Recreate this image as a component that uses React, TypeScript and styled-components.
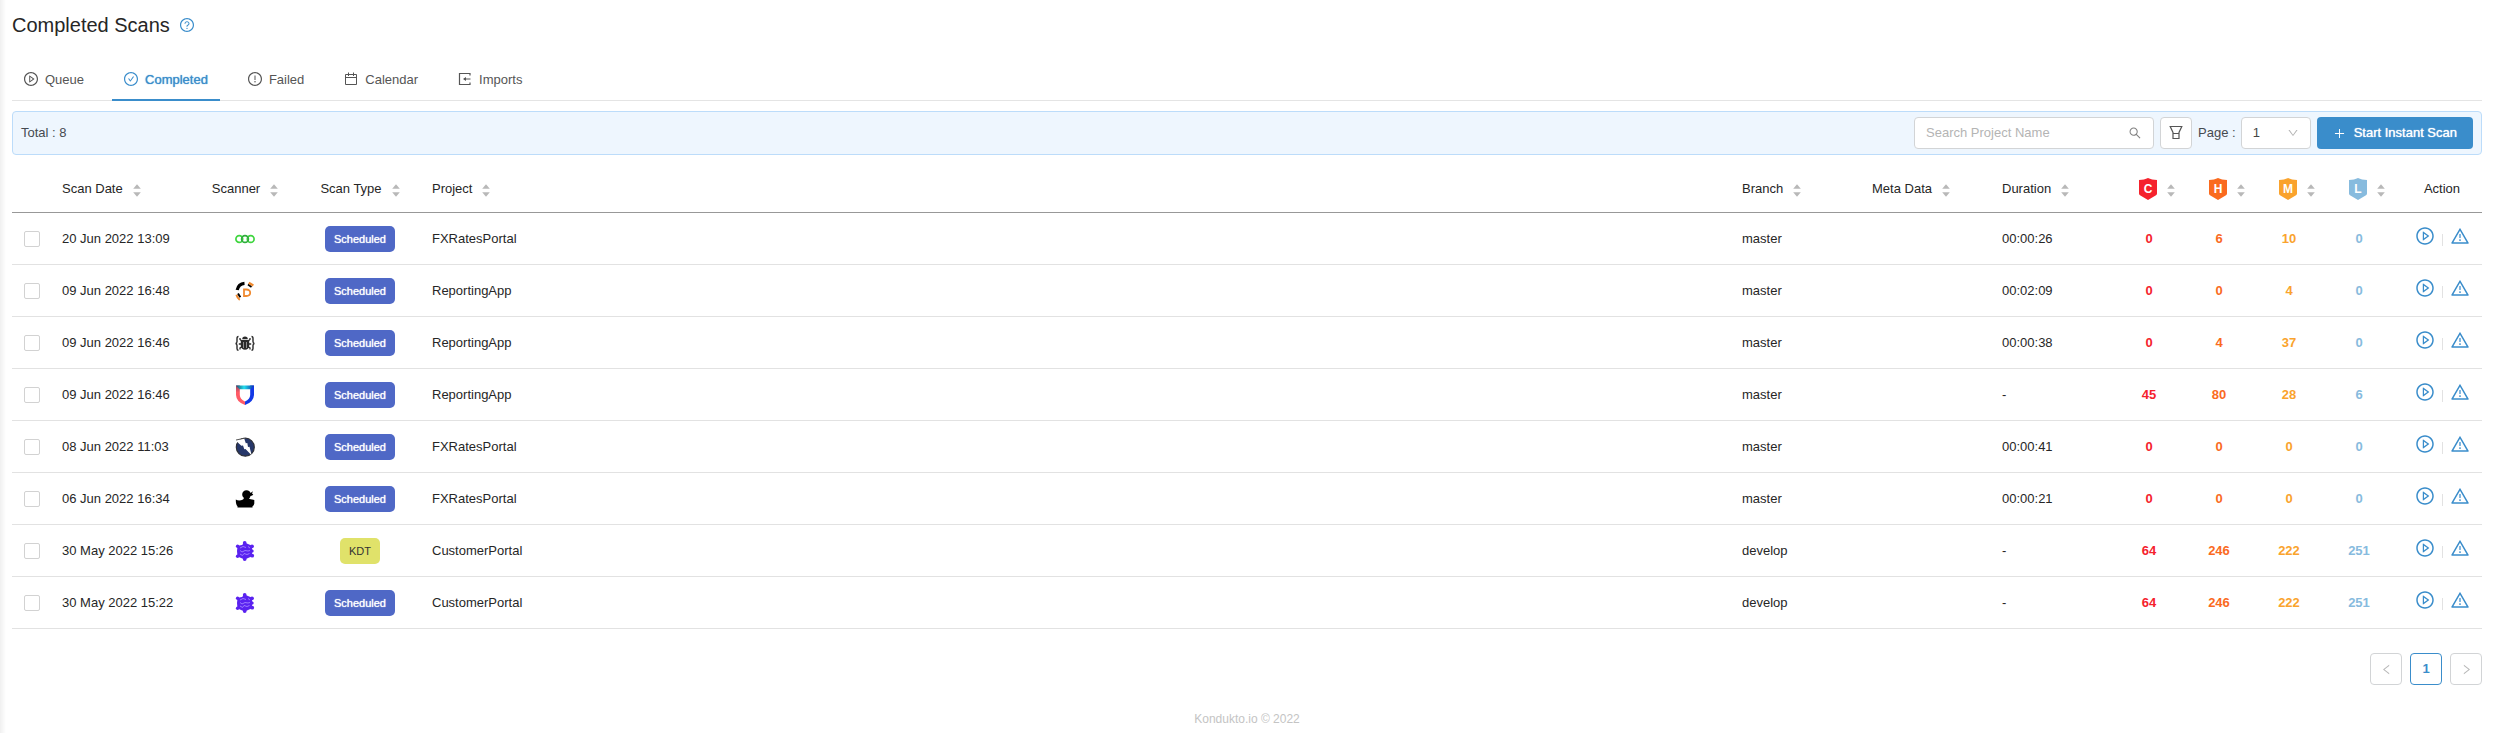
import React from "react";
import styled, { createGlobalStyle } from "styled-components";
import {
  AiOutlineCheckCircle,
  AiOutlineDown,
  AiOutlineExclamationCircle,
  AiOutlineLeft,
  AiOutlinePlayCircle,
  AiOutlinePlus,
  AiOutlineQuestionCircle,
  AiOutlineRight,
  AiOutlineSearch,
  AiOutlineWarning,
} from "react-icons/ai";

const GlobalStyle = createGlobalStyle`
  *, *::before, *::after { box-sizing: border-box; }
  body {
    margin: 0;
    background: #fff;
    color: #262626;
    font: 13px/20px "Liberation Sans", Arial, sans-serif;
  }
  button, input, select { font: inherit; color: inherit; }
  svg { display: block; flex: none; }
`;

const blue = "#3a8dcb";

const Page = styled.main`
  min-height: 100vh;
  padding: 10px 13px 4px 12px;
  background: linear-gradient(to right, #f0f0f0, #fff 6px);
`;

const TitleBar = styled.header`
  display: flex;
  align-items: center;
  gap: 9px;
  height: 30px;
  margin-bottom: 17px;
`;

const Title = styled.h1`
  margin: 0;
  font-size: 20px;
  line-height: 30px;
  font-weight: 400;
`;

const HelpButton = styled.button`
  padding: 0;
  border: 0;
  background: none;
  color: ${blue};
  font-size: 16px;
  cursor: pointer;
`;

const Tabs = styled.nav`
  display: flex;
  gap: 16px;
  height: 44px;
  box-shadow: inset 0 -1px #e4e4e4;
`;

const Tab = styled.a<{ $active?: boolean }>`
  display: flex;
  align-items: center;
  gap: 6px;
  padding: 3px 12px 0 11px;
  border-bottom: 2px solid ${(p) => (p.$active ? blue : "transparent")};
  color: ${(p) => (p.$active ? blue : "#555")};
  text-shadow: ${(p) => (p.$active ? "0 0 1px currentColor" : "none")};
  text-decoration: none;
  & > svg { width: 16px; height: 16px; margin-bottom: 2px; }
`;

const Toolbar = styled.div`
  display: flex;
  align-items: center;
  gap: 6px;
  height: 44px;
  margin: 10px 0;
  padding: 0 8px;
  border: 1px solid #bcdcfa;
  border-radius: 4px;
  background: #eef6fe;
  color: #454a50;
`;

const Total = styled.span`
  flex: 1;
`;

const SearchField = styled.label`
  display: flex;
  align-items: center;
  width: 240px;
  height: 32px;
  padding: 0 11px;
  border: 1px solid #d2d4d6;
  border-radius: 4px;
  background: #fff;
  color: #808080;
`;

const SearchInput = styled.input`
  flex: 1;
  min-width: 0;
  padding: 0;
  border: 0;
  outline: 0;
  background: none;
  &::placeholder { color: #b4b4b4; opacity: 1; }
`;

const SquareButton = styled.button<{ $active?: boolean }>`
  display: flex;
  align-items: center;
  justify-content: center;
  width: 32px;
  height: 32px;
  padding: 0;
  border: 1px solid ${(p) => (p.$active ? blue : "#d2d4d6")};
  border-radius: 4px;
  background: #fff;
  color: ${(p) => (p.$active ? blue : "#555")};
  font-weight: ${(p) => (p.$active ? 700 : 400)};
  &:disabled { color: #b8b8b8; }
`;

const PageLabel = styled.label`
  display: flex;
  align-items: center;
  gap: 5px;
`;

const SelectBox = styled.span`
  display: grid;
  align-items: center;
  width: 70px;
  height: 32px;
  color: #454545;
  & > * { grid-area: 1 / 1; }
  & > svg {
    justify-self: end;
    margin-right: 12px;
    color: #b4b4b4;
    font-size: 12px;
    pointer-events: none;
  }
`;

const Select = styled.select`
  width: 100%;
  height: 32px;
  padding: 0 11px;
  border: 1px solid #d2d4d6;
  border-radius: 4px;
  background: #fff;
  appearance: none;
`;

const PrimaryButton = styled.button`
  display: flex;
  align-items: center;
  gap: 8px;
  height: 32px;
  padding: 0 16px;
  border: 0;
  border-radius: 4px;
  background: ${blue};
  color: #fff;
  text-shadow: 0 0 1px currentColor;
`;

const ScanTable = styled.table`
  width: 100%;
  table-layout: fixed;
  border-collapse: separate;
  border-spacing: 0;
`;

const Col = styled.col<{ $w?: number }>`
  width: ${(p) => (p.$w ? `${p.$w}px` : "auto")};
`;

const HeadCell = styled.th<{ $center?: boolean }>`
  height: 48px;
  padding: 0 ${(p) => (p.$center ? 0 : 12)}px;
  border-bottom: 1px solid #989898;
  font-weight: 400;
  text-align: ${(p) => (p.$center ? "center" : "left")};
`;

const HeadLabel = styled.span`
  display: inline-flex;
  align-items: center;
  gap: 10px;
  vertical-align: middle;
`;

const SortButton = styled.button`
  padding: 4px 0 0;
  border: 0;
  background: none;
  color: #b8b8b8;
`;

const Cell = styled.td<{ $center?: boolean }>`
  height: 52px;
  padding: 0 ${(p) => (p.$center ? 0 : 12)}px;
  border-bottom: 1px solid #e2e2e2;
  text-align: ${(p) => (p.$center ? "center" : "left")};
`;

const CountCell = styled(Cell)<{ $color: string }>`
  padding-right: 16px;
  color: ${(p) => p.$color};
  font-weight: 700;
  text-align: center;
`;

const Checkbox = styled.input`
  display: block;
  width: 16px;
  height: 16px;
  margin: 0;
  border: 1px solid #d2d2d2;
  border-radius: 2px;
  background: #fff;
  appearance: none;
  &:checked { background: ${blue}; border-color: ${blue}; }
`;

const IconHolder = styled.span`
  display: flex;
  justify-content: center;
`;

const Tag = styled.span<{ $kdt?: boolean }>`
  display: inline-block;
  padding: 0 9px;
  border-radius: 5px;
  background: ${(p) => (p.$kdt ? "#e0e26a" : "#4f68c6")};
  color: ${(p) => (p.$kdt ? "#333" : "#fff")};
  font-size: 11px;
  line-height: 26px;
  text-shadow: ${(p) => (p.$kdt ? "none" : "0 0 1px currentColor")};
  vertical-align: middle;
`;

const Actions = styled.span`
  display: flex;
  align-items: center;
  justify-content: center;
  gap: 7px;
  padding-bottom: 6px;
  color: ${blue};
`;

const ActionButton = styled.button`
  padding: 0;
  border: 0;
  background: none;
  color: inherit;
  font-size: 20px;
`;

const Divider = styled.span`
  align-self: flex-end;
  width: 1px;
  height: 12px;
  background: #e2e2e2;
`;

const Pagination = styled.nav`
  display: flex;
  justify-content: flex-end;
  gap: 8px;
  margin-top: 24px;
`;

const Footer = styled.footer`
  margin-top: 24px;
  color: #c4c4c4;
  font-size: 12px;
  text-align: center;
`;

function CalendarIcon() {
  return (
    <svg viewBox="0 0 16 16" fill="none" stroke="currentColor">
      <path d="M2.500 3.500H13.500V13.500H2.500ZM2.500 6.500H13.500M5.500 1.500V5M10.500 1.500V5" />
    </svg>
  );
}

function ImportIcon() {
  return (
    <svg viewBox="0 0 16 16" fill="none" stroke="currentColor" strokeWidth="1.200">
      <path d="M13 4.500V2.500H2.500V13.500H13V11.500M7 8H13.500" />
      <path d="M9 6V10L6 8Z" fill="currentColor" stroke="none" />
    </svg>
  );
}

function FilterIcon() {
  return (
    <svg width="16" height="16" viewBox="0 0 16 16" fill="none" stroke="currentColor" strokeWidth="1.200">
      <path d="M2.200 1.500H13.800L11 7.500V13.500H5V7.500ZM5 8.500H11" />
    </svg>
  );
}

function Sorter({ label }: { label: string }) {
  return (
    <SortButton type="button" aria-label={`Sort by ${label}`}>
      <svg width="8" height="13" viewBox="0 0 8 13" fill="currentColor">
        <path d="M4 0.3 7.8 4.8H0.2Z" />
        <path d="M0.2 8.2H7.8L4 12.7Z" />
      </svg>
    </SortButton>
  );
}

function Severity({ letter, color }: { letter: string; color: string }) {
  return (
    <svg width="18" height="22" viewBox="0 0 18 22">
      <path d="M9 0C11.500 1.300 14.500 1.900 18 2V15.500Q18 16.500 17 17.200L9 22 1 17.200Q0 16.500 0 15.500V2C3.500 1.900 6.500 1.300 9 0Z" fill={color} />
      <text x="9" y="15" fill="#fff" fontSize="12" fontWeight="700" textAnchor="middle" fontFamily="Liberation Sans, Arial, sans-serif">
        {letter}
      </text>
    </svg>
  );
}

type ScannerName = "rings" | "depcheck" | "bug" | "shield" | "zap" | "duck" | "cluster";

const logos: Record<ScannerName, React.ReactNode> = {
  rings: (
    <g fill="none" strokeWidth="1.700">
      <circle cx="4.300" cy="10" r="3.400" stroke="#3fd63f" />
      <circle cx="15.700" cy="10" r="3.400" stroke="#3fd63f" />
      <circle cx="10" cy="10" r="3.400" stroke="#2fae3c" />
    </g>
  ),
  depcheck: (
    <g fill="none">
      <path d="M2.200 9C3 5 5.500 2.600 9.500 2.300" stroke="#000" strokeWidth="3.200" />
      <path d="M13 3.600 16.500 6" stroke="#000" strokeWidth="1.800" />
      <path d="M13.800 1.800 18.300 4.600" stroke="#f08a30" strokeWidth="2.400" />
      <path d="M3 12.500 5.300 16.300" stroke="#000" strokeWidth="2" />
      <path d="M1.400 13.800C2 16 3 17.600 4.800 18.800" stroke="#f08a30" strokeWidth="2" />
      <path d="M9 8.500V15H11.300C13.900 15 15.200 13.800 15.200 11.800S13.900 8.500 11.300 8.500Z" stroke="#f08a30" strokeWidth="1.800" />
    </g>
  ),
  bug: (
    <g stroke="#2a2a2a" fill="none">
      <path d="M3.500 3.500Q2 3.500 2 5.500V8.500Q2 10.200 0.600 10.500 2 10.800 2 12.500V15.500Q2 17.300 3.500 17.300M16.500 3.500Q18 3.500 18 5.500V8.500Q18 10.200 19.400 10.500 18 10.800 18 12.500V15.500Q18 17.300 16.500 17.300" strokeWidth="1.400" />
      <path d="M7 8 5 6.500V5M13 8 15 6.500V5M6.500 11H3.800M13.500 11H16.200M7 14 5 15V16.500M13 14 15 15V16.500" strokeWidth="1.300" />
      <path d="M7.200 6.200Q7.200 3.600 10 3.600T12.800 6.200Z" fill="#2a2a2a" stroke="none" />
      <path d="M5.800 7H14.200V13.500Q13.500 16.600 10 16.800 6.500 16.600 5.800 13.500Z" fill="#2a2a2a" stroke="none" />
      <path d="M8.500 9V15M11.500 9V15" stroke="#aaa" strokeWidth="0.800" />
    </g>
  ),
  shield: (
    <g>
      <defs>
        <linearGradient id="shieldTop" x1="0" x2="1">
          <stop offset="0" stopColor="#1d4a70" />
          <stop offset="0.450" stopColor="#22e0ee" />
          <stop offset="1" stopColor="#0b2fa8" />
        </linearGradient>
        <linearGradient id="shieldLeft" x1="0" x2="0" y1="0" y2="1">
          <stop offset="0" stopColor="#8a4a68" />
          <stop offset="0.350" stopColor="#ff5a66" />
          <stop offset="1" stopColor="#ff5a66" />
        </linearGradient>
      </defs>
      <path d="M1 0.500H4.800V10Q5 14 10 16.500V20Q1.300 17 1 10Z" fill="url(#shieldLeft)" />
      <path d="M19 0.500H15.200V10Q15 14 10 16.500V20Q18.700 17 19 10Z" fill="#1238e6" />
      <path d="M1 0.500H19L15.500 4.200H4.500Z" fill="url(#shieldTop)" />
    </g>
  ),
  zap: (
    <g>
      <circle cx="10.300" cy="10.200" r="9" fill="#26376a" stroke="#2f3138" strokeWidth="1.200" />
      <path d="M0.500 3.200 9.200 1.600 10.800 6.300 12.300 6 13 10 14.500 9.800 16.600 18.300 10.500 12 9.300 12.200 8 8.500 6.300 8.800Z" fill="#fff" />
      <path d="M1 3 9 1.300" stroke="#444" strokeWidth="0.900" />
    </g>
  ),
  duck: (
    <path
      d="M11.500 1.200C14 1.200 15.300 2.700 15.500 4L18 2.200 17 4.500 18.300 5.600Q17.500 7 15.500 7 15.200 8.700 14 9.800C16.500 10.400 18 10.600 19.300 11V14.500Q19 16.800 17.500 17.300V18.500H2.500V17.200Q0.700 15.500 0.800 10.500 4 12.300 8 10.500 9 10 8.800 8.800C7.600 7.800 7.200 6.500 7.200 5.200 7.200 3 9 1.200 11.500 1.200Z"
      fill="#000"
    />
  ),
  cluster: (
    <g>
      <path
        d="M9.500 1.500 16.500 4.500 17.500 10 16.500 15.500 9.700 18.500 2.500 15.500 2 10 2.600 4.800 7 4Z"
        fill="#5a22f0"
      />
      <g fill="#5a22f0">
        <circle cx="9.700" cy="2" r="1.900" />
        <circle cx="2.600" cy="5.300" r="1.700" />
        <circle cx="17" cy="5.300" r="1.900" />
        <circle cx="17.200" cy="10" r="1.500" />
        <circle cx="17.200" cy="14.700" r="1.900" />
        <circle cx="2.600" cy="15.200" r="1.700" />
        <circle cx="9.700" cy="18" r="1.900" />
      </g>
      <path
        d="M5 7 8 5.500 11 6.500M13 5.500 15 7M5 9.500 7 11 10 9.500 13 10 15 9.500M5 13 7.500 14.500 9 12.500 12 13.500 14.500 12.500"
        fill="none"
        stroke="#a584ff"
        strokeWidth="0.900"
      />
    </g>
  ),
};

function ScannerLogo({ name }: { name: ScannerName }) {
  return (
    <IconHolder>
      <svg width="20" height="20" viewBox="0 0 20 20" role="img" aria-label={name}>
        {logos[name]}
      </svg>
    </IconHolder>
  );
}

const severities = [
  { letter: "C", label: "critical", color: "#f5222d" },
  { letter: "H", label: "high", color: "#fa6a1e" },
  { letter: "M", label: "medium", color: "#faa32d" },
  { letter: "L", label: "low", color: "#87bbde" },
];

interface Scan {
  date: string;
  scanner: ScannerName;
  type: "Scheduled" | "KDT";
  project: string;
  branch: string;
  duration: string;
  counts: number[];
}

const scans: Scan[] = [
  { date: "20 Jun 2022 13:09", scanner: "rings", type: "Scheduled", project: "FXRatesPortal", branch: "master", duration: "00:00:26", counts: [0, 6, 10, 0] },
  { date: "09 Jun 2022 16:48", scanner: "depcheck", type: "Scheduled", project: "ReportingApp", branch: "master", duration: "00:02:09", counts: [0, 0, 4, 0] },
  { date: "09 Jun 2022 16:46", scanner: "bug", type: "Scheduled", project: "ReportingApp", branch: "master", duration: "00:00:38", counts: [0, 4, 37, 0] },
  { date: "09 Jun 2022 16:46", scanner: "shield", type: "Scheduled", project: "ReportingApp", branch: "master", duration: "-", counts: [45, 80, 28, 6] },
  { date: "08 Jun 2022 11:03", scanner: "zap", type: "Scheduled", project: "FXRatesPortal", branch: "master", duration: "00:00:41", counts: [0, 0, 0, 0] },
  { date: "06 Jun 2022 16:34", scanner: "duck", type: "Scheduled", project: "FXRatesPortal", branch: "master", duration: "00:00:21", counts: [0, 0, 0, 0] },
  { date: "30 May 2022 15:26", scanner: "cluster", type: "KDT", project: "CustomerPortal", branch: "develop", duration: "-", counts: [64, 246, 222, 251] },
  { date: "30 May 2022 15:22", scanner: "cluster", type: "Scheduled", project: "CustomerPortal", branch: "develop", duration: "-", counts: [64, 246, 222, 251] },
];

const columns = [
  { label: "Scan Date" },
  { label: "Scanner", center: true },
  { label: "Scan Type", center: true },
  { label: "Project" },
  { label: "Branch" },
  { label: "Meta Data" },
  { label: "Duration" },
];

const widths = [38, 140, 110, 120, undefined, 130, 130, 132, 70, 70, 70, 70, 80];

export default function App() {
  return (
    <>
      <GlobalStyle />
      <Page>
        <TitleBar>
          <Title>Completed Scans</Title>
          <HelpButton type="button" aria-label="Help">
            <AiOutlineQuestionCircle />
          </HelpButton>
        </TitleBar>

        <Tabs aria-label="Scan lists">
          <Tab href="#queue"><AiOutlinePlayCircle />Queue</Tab>
          <Tab href="#completed" $active aria-current="page"><AiOutlineCheckCircle />Completed</Tab>
          <Tab href="#failed"><AiOutlineExclamationCircle />Failed</Tab>
          <Tab href="#calendar"><CalendarIcon />Calendar</Tab>
          <Tab href="#imports"><ImportIcon />Imports</Tab>
        </Tabs>

        <Toolbar>
          <Total>Total : 8</Total>
          <SearchField>
            <SearchInput type="text" placeholder="Search Project Name" aria-label="Search Project Name" />
            <AiOutlineSearch size={14} />
          </SearchField>
          <SquareButton type="button" aria-label="Filter"><FilterIcon /></SquareButton>
          <PageLabel>
            Page :
            <SelectBox>
              <Select defaultValue="1"><option>1</option></Select>
              <AiOutlineDown />
            </SelectBox>
          </PageLabel>
          <PrimaryButton type="button"><AiOutlinePlus />Start Instant Scan</PrimaryButton>
        </Toolbar>

        <ScanTable>
          <colgroup>
            {widths.map((w, i) => <Col key={i} $w={w} />)}
          </colgroup>
          <thead>
            <tr>
              <HeadCell aria-label="Select" />
              {columns.map((c) => (
                <HeadCell key={c.label} $center={c.center} scope="col">
                  <HeadLabel>{c.label}<Sorter label={c.label} /></HeadLabel>
                </HeadCell>
              ))}
              {severities.map((s) => (
                <HeadCell key={s.letter} $center scope="col">
                  <HeadLabel><Severity letter={s.letter} color={s.color} /><Sorter label={s.label} /></HeadLabel>
                </HeadCell>
              ))}
              <HeadCell $center scope="col">Action</HeadCell>
            </tr>
          </thead>
          <tbody>
            {scans.map((scan, i) => (
              <tr key={i}>
                <Cell><Checkbox type="checkbox" aria-label={`Select scan ${scan.date}`} /></Cell>
                <Cell>{scan.date}</Cell>
                <Cell $center><ScannerLogo name={scan.scanner} /></Cell>
                <Cell $center><Tag $kdt={scan.type === "KDT"}>{scan.type}</Tag></Cell>
                <Cell>{scan.project}</Cell>
                <Cell>{scan.branch}</Cell>
                <Cell />
                <Cell>{scan.duration}</Cell>
                {scan.counts.map((n, k) => (
                  <CountCell key={k} $center $color={severities[k].color}>{n}</CountCell>
                ))}
                <Cell $center>
                  <Actions>
                    <ActionButton type="button" aria-label="Rescan"><AiOutlinePlayCircle /></ActionButton>
                    <Divider />
                    <ActionButton type="button" aria-label="Show issues"><AiOutlineWarning /></ActionButton>
                  </Actions>
                </Cell>
              </tr>
            ))}
          </tbody>
        </ScanTable>

        <Pagination aria-label="Pagination">
          <SquareButton type="button" disabled aria-label="Previous page"><AiOutlineLeft /></SquareButton>
          <SquareButton type="button" $active aria-current="page">1</SquareButton>
          <SquareButton type="button" disabled aria-label="Next page"><AiOutlineRight /></SquareButton>
        </Pagination>

        <Footer>Kondukto.io © 2022</Footer>
      </Page>
    </>
  );
}
